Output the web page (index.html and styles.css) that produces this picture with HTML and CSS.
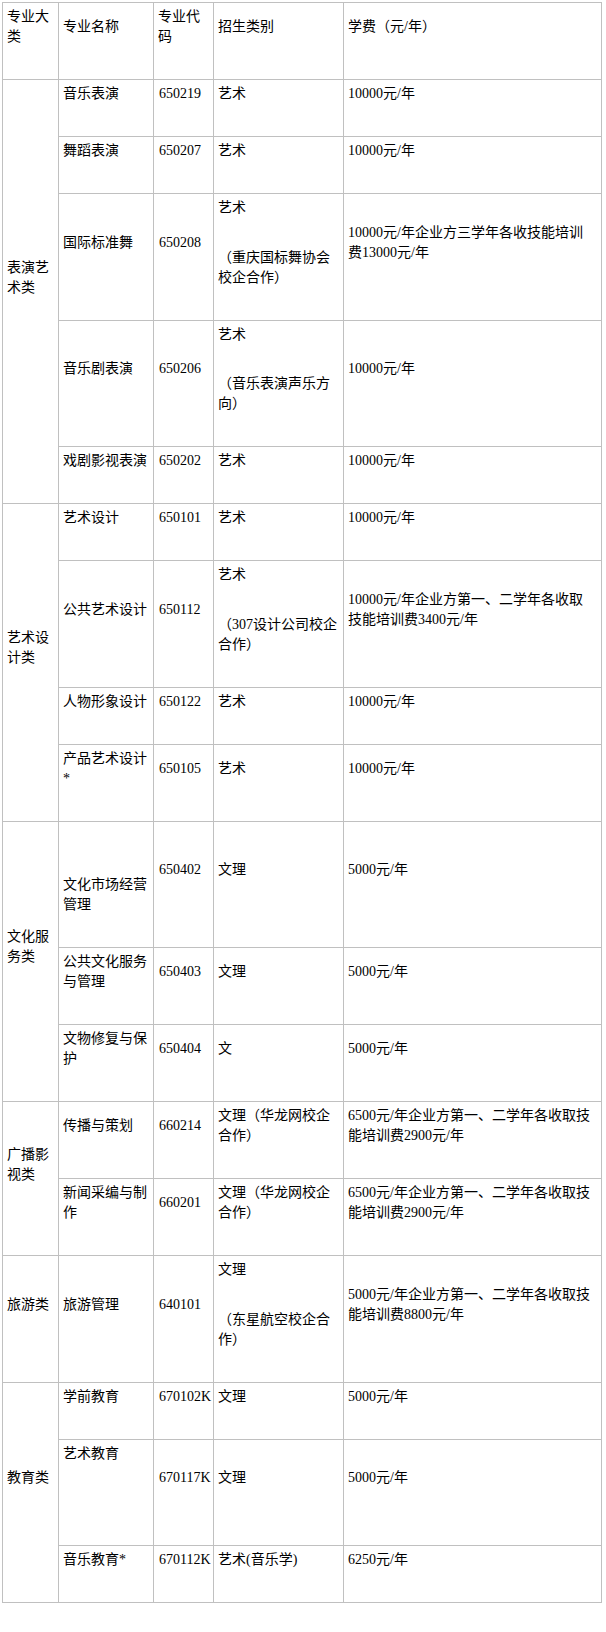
FILE: index.html
```html
<!DOCTYPE html>
<html lang="zh-CN">
<head>
<meta charset="utf-8">
<title>专业收费表</title>
<link rel="stylesheet" href="styles.css">
</head>
<body>
<div class="page">
<table class="majors">
<colgroup><col class="c1"><col class="c2"><col class="c3"><col class="c4"><col class="c5"></colgroup>
<tbody>
<tr>
<td><p>专业大类</p></td>
<td><p>专业名称</p></td>
<td><p>专业代码</p></td>
<td><p>招生类别</p></td>
<td class="fee"><p>学费（元/年）</p></td>
</tr>
<tr>
<td rowspan="5"><p>表演艺术类</p></td>
<td><p>音乐表演</p></td>
<td class="code"><p>650219</p></td>
<td><p>艺术</p></td>
<td class="fee"><p>10000元/年</p></td>
</tr>
<tr>
<td><p>舞蹈表演</p></td>
<td class="code"><p>650207</p></td>
<td><p>艺术</p></td>
<td class="fee"><p>10000元/年</p></td>
</tr>
<tr>
<td><p>国际标准舞</p></td>
<td class="code"><p>650208</p></td>
<td><p>艺术</p><p>（重庆国标舞协会校企合作）</p></td>
<td class="fee"><p>10000元/年企业方三学年各收技能培训费13000元/年</p></td>
</tr>
<tr>
<td><p>音乐剧表演</p></td>
<td class="code"><p>650206</p></td>
<td><p>艺术</p><p>（音乐表演声乐方向）</p></td>
<td class="fee"><p>10000元/年</p></td>
</tr>
<tr>
<td><p>戏剧影视表演</p></td>
<td class="code"><p>650202</p></td>
<td><p>艺术</p></td>
<td class="fee"><p>10000元/年</p></td>
</tr>
<tr>
<td rowspan="4"><p>艺术设计类</p></td>
<td><p>艺术设计</p></td>
<td class="code"><p>650101</p></td>
<td><p>艺术</p></td>
<td class="fee"><p>10000元/年</p></td>
</tr>
<tr>
<td><p>公共艺术设计</p></td>
<td class="code"><p>650112</p></td>
<td><p>艺术</p><p>（307设计公司校企合作）</p></td>
<td class="fee"><p>10000元/年企业方第一、二学年各收取技能培训费3400元/年</p></td>
</tr>
<tr>
<td><p>人物形象设计</p></td>
<td class="code"><p>650122</p></td>
<td><p>艺术</p></td>
<td class="fee"><p>10000元/年</p></td>
</tr>
<tr>
<td><p>产品艺术设计*</p></td>
<td class="code"><p>650105</p></td>
<td><p>艺术</p></td>
<td class="fee"><p>10000元/年</p></td>
</tr>
<tr>
<td rowspan="3"><p>文化服务类</p></td>
<td><p>&nbsp;</p><p>文化市场经营管理</p></td>
<td class="code"><p>650402</p></td>
<td><p>文理</p></td>
<td class="fee"><p>5000元/年</p></td>
</tr>
<tr>
<td><p>公共文化服务与管理</p></td>
<td class="code"><p>650403</p></td>
<td><p>文理</p></td>
<td class="fee"><p>5000元/年</p></td>
</tr>
<tr>
<td><p>文物修复与保护</p></td>
<td class="code"><p>650404</p></td>
<td><p>文</p></td>
<td class="fee"><p>5000元/年</p></td>
</tr>
<tr>
<td rowspan="2"><p>广播影视类</p></td>
<td><p>传播与策划</p></td>
<td class="code"><p>660214</p></td>
<td><p>文理（华龙网校企合作）</p></td>
<td class="fee"><p>6500元/年企业方第一、二学年各收取技能培训费2900元/年</p></td>
</tr>
<tr>
<td><p>新闻采编与制作</p></td>
<td class="code"><p>660201</p></td>
<td><p>文理（华龙网校企合作）</p></td>
<td class="fee"><p>6500元/年企业方第一、二学年各收取技能培训费2900元/年</p></td>
</tr>
<tr>
<td><p>旅游类</p></td>
<td><p>旅游管理</p></td>
<td class="code"><p>640101</p></td>
<td><p>文理</p><p>（东星航空校企合作）</p></td>
<td class="fee"><p>5000元/年企业方第一、二学年各收取技能培训费8800元/年</p></td>
</tr>
<tr>
<td rowspan="3"><p>教育类</p></td>
<td><p>学前教育</p></td>
<td class="code"><p>670102K</p></td>
<td><p>文理</p></td>
<td class="fee"><p>5000元/年</p></td>
</tr>
<tr>
<td><p>艺术教育</p><p>&nbsp;</p></td>
<td class="code"><p>670117K</p></td>
<td><p>文理</p></td>
<td class="fee"><p>5000元/年</p></td>
</tr>
<tr>
<td><p>音乐教育*</p></td>
<td class="code"><p>670112K</p></td>
<td><p>艺术(音乐学)</p></td>
<td class="fee"><p>6250元/年</p></td>
</tr>
</tbody>
</table>
</div>
</body>
</html>
```

FILE: styles.css
```css
html, body {
  margin: 0;
  padding: 0;
  background: #ffffff;
}

.page {
  padding: 2px;
}

.majors {
  border-collapse: collapse;
  table-layout: fixed;
  width: 600px;
  font-family: "Liberation Serif", "Noto Sans CJK SC", serif;
  font-size: 14px;
  line-height: 20px;
  color: #000000;
}

.c1 { width: 56px; }
.c2 { width: 95px; }
.c3 { width: 60px; }
.c4 { width: 130px; }
.c5 { width: 258px; }

.majors td {
  border: 1px solid #c0c0c0;
  padding: 4px 4px 2.5px 4px;
  vertical-align: middle;
  text-align: left;
}

.majors p {
  margin: 0 0 29.5px 0;
}

.majors td.code {
  padding-right: 2px;
  padding-left: 5px;
}

.majors td.fee {
  padding-right: 8px;
}
```
